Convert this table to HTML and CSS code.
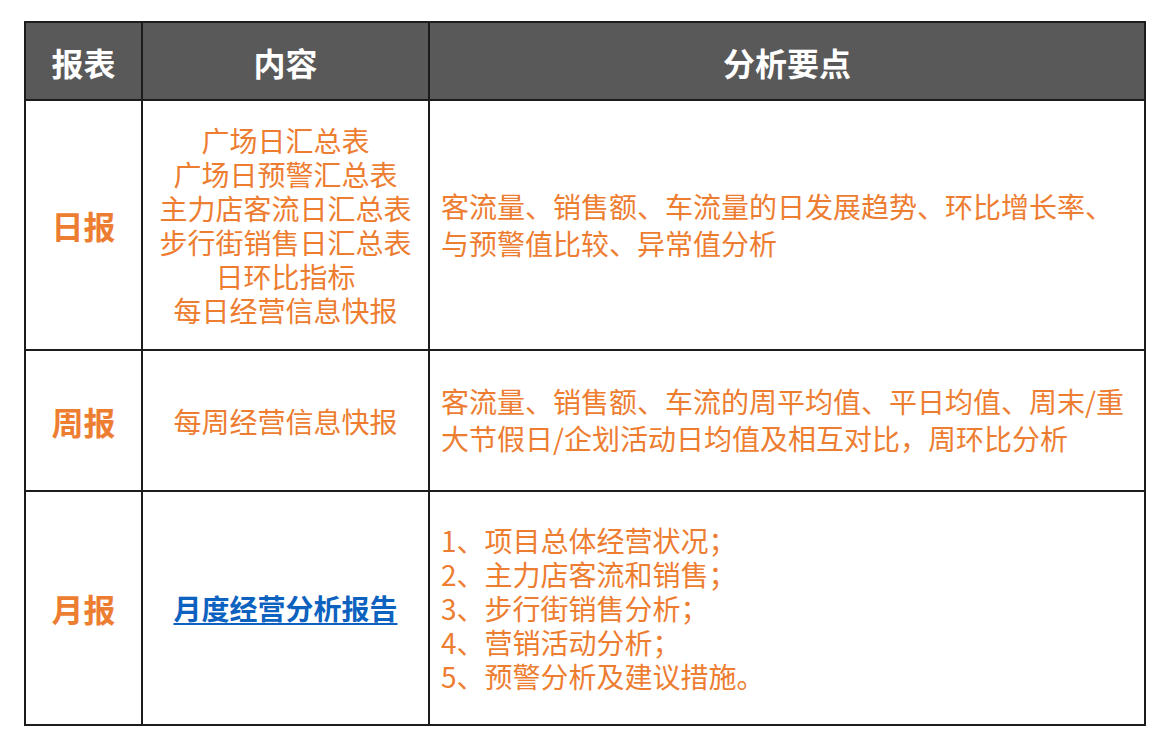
FILE: index.html
```html
<!DOCTYPE html>
<html lang="zh-CN">
<head>
<meta charset="utf-8">
<title>报表</title>
<link rel="stylesheet" href="styles.css">
</head>
<body>
<div class="sheet">
  <div class="cell head">报表</div>
  <div class="cell head">内容</div>
  <div class="cell head">分析要点</div>

  <div class="cell label row1">日报</div>
  <div class="cell content row1">广场日汇总表<br>广场日预警汇总表<br>主力店客流日汇总表<br>步行街销售日汇总表<br>日环比指标<br>每日经营信息快报</div>
  <div class="cell points wide row1">客流量、销售额、车流量的日发展趋势、环比增长率、<br>与预警值比较、异常值分析</div>

  <div class="cell label row2">周报</div>
  <div class="cell content row2">每周经营信息快报</div>
  <div class="cell points wide row2">客流量、销售额、车流的周平均值、平日均值、周末/重<br>大节假日/企划活动日均值及相互对比，周环比分析</div>

  <div class="cell label row3">月报</div>
  <div class="cell content row3"><a class="link" href="#">月度经营分析报告</a></div>
  <div class="cell points list row3">1、项目总体经营状况；<br>2、主力店客流和销售；<br>3、步行街销售分析；<br>4、营销活动分析；<br>5、预警分析及建议措施。</div>
</div>
</body>
</html>
```

FILE: styles.css
```css
html, body {
  margin: 0;
  padding: 0;
  background: #ffffff;
}

body {
  font-family: "Noto Sans CJK SC", "Noto Sans", sans-serif;
  padding: 21px 0 0 24px;
}

.sheet {
  display: grid;
  grid-template-columns: 117px 287px 716px;
  grid-template-rows: 78px 250px 141px 234px;
  width: 1122px;
  box-sizing: border-box;
  border-top: 2px solid #1c1c1c;
  border-left: 2px solid #1c1c1c;
}

.cell {
  box-sizing: border-box;
  border-right: 2px solid #1c1c1c;
  border-bottom: 2px solid #1c1c1c;
  display: flex;
  align-items: center;
  justify-content: center;
  text-align: center;
  color: #ed7d31;
  white-space: nowrap;
}

.head {
  background: #595959;
  color: #ffffff;
  font-weight: 700;
  font-size: 32px;
  line-height: 40px;
  padding-top: 2px;
}

.label {
  font-weight: 700;
  font-size: 32px;
  line-height: 40px;
}

.content {
  font-size: 28px;
  line-height: 34px;
}

.points {
  justify-content: flex-start;
  text-align: left;
  font-size: 28px;
  padding-left: 11px;
}

.wide {
  line-height: 37px;
  padding-bottom: 1px;
}

.list {
  line-height: 34px;
}

.link {
  color: #0d62c0;
  font-weight: 700;
  text-decoration: underline;
  text-decoration-thickness: 2px;
  text-underline-offset: 3px;
}
```
